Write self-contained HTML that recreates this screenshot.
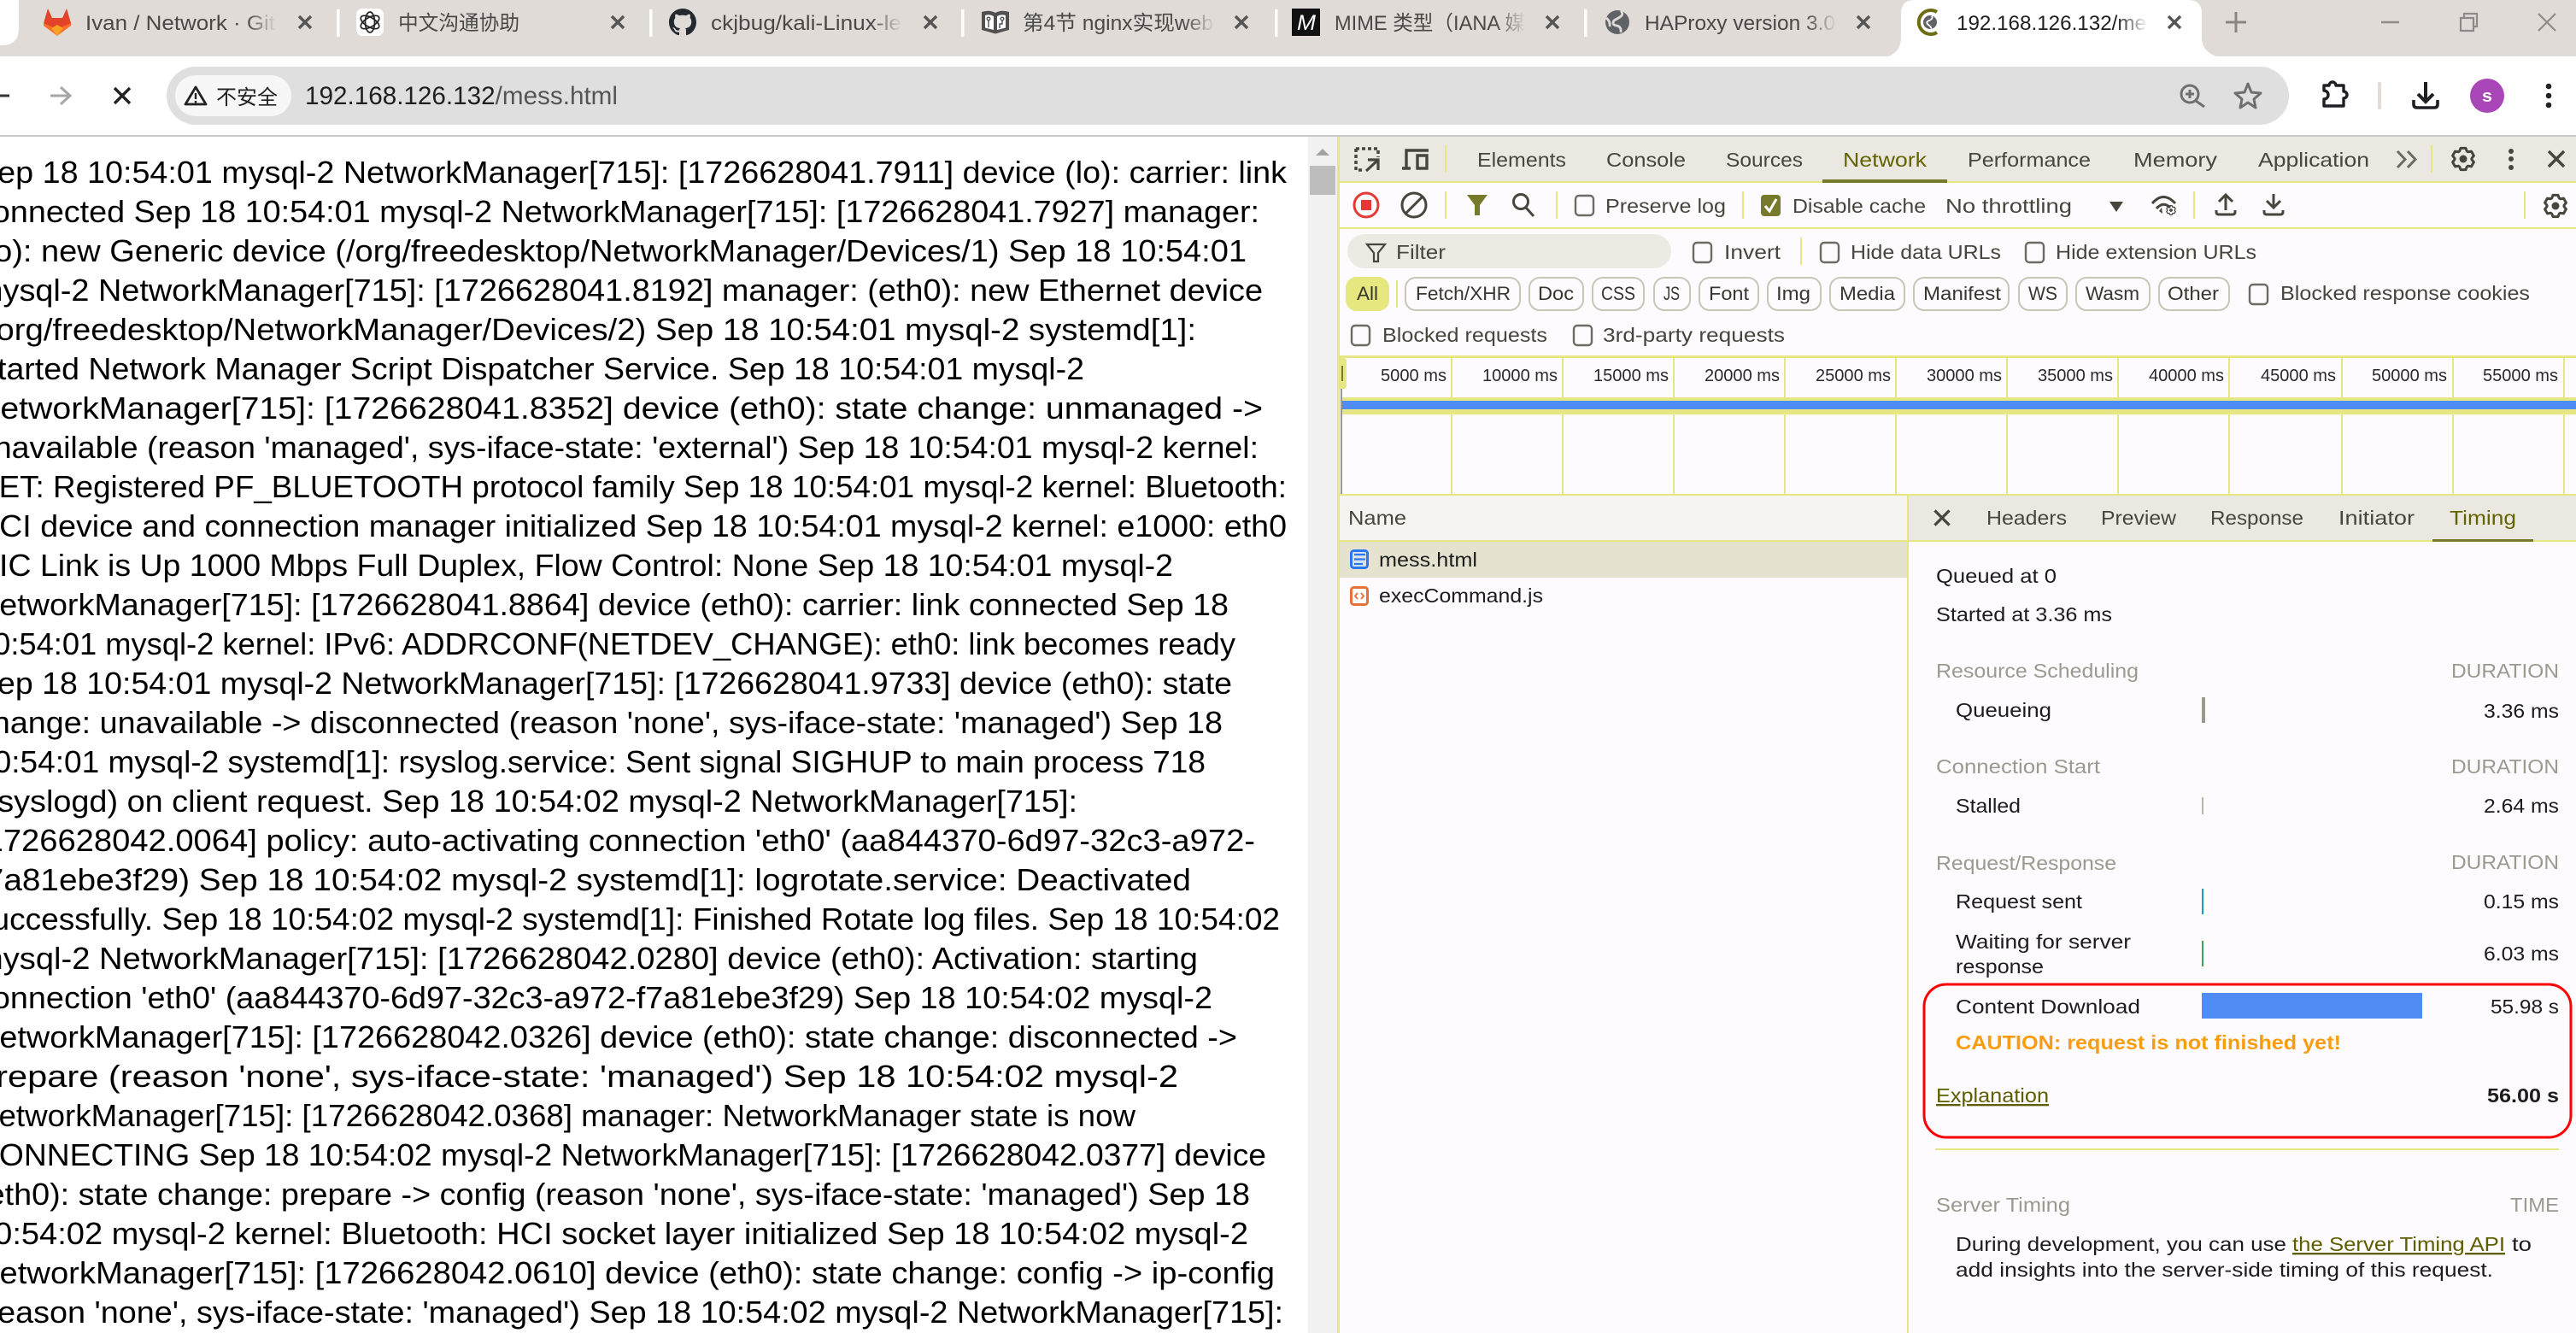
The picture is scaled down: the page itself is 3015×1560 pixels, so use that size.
<!DOCTYPE html>
<html lang="zh"><head><meta charset="utf-8"><title>192.168.126.132/mess.html</title>
<style>
html,body{margin:0;padding:0;width:3015px;height:1560px;overflow:hidden;background:#fff}
svg{display:block}
text{font-family:"Liberation Sans","Noto Sans CJK SC",sans-serif;font-size:23.5px;fill:#46463d;white-space:pre}
.b text{font-size:36px;fill:#000}
.t text{font-size:24px;fill:#4c4845}
.k text{fill:#1c1c1c}
.g text{fill:#9a9a8e}
.m text{font-size:20px;fill:#2a2a2a}
.c text{font-size:22.5px;fill:#37372f}
.i{fill:none;stroke:#46463d;stroke-width:3}
</style></head><body>
<svg width="3015" height="1560" viewBox="0 0 3015 1560" xmlns="http://www.w3.org/2000/svg">
<defs>
<linearGradient id="f"><stop offset="0" stop-color="#e1dbd8" stop-opacity="0"/><stop offset="1" stop-color="#e1dbd8"/></linearGradient>
<linearGradient id="fw"><stop offset="0" stop-color="#fff" stop-opacity="0"/><stop offset="1" stop-color="#fff"/></linearGradient>
<g id="gear"><polygon points="-4.38,-8.99 -2.92,-12.67 2.92,-12.67 4.38,-8.99 5.59,-8.29 9.51,-8.87 12.43,-3.8 9.98,-.7 9.98,.7 12.43,3.8 9.51,8.87 5.59,8.29 4.38,8.99 2.92,12.67 -2.92,12.67 -4.38,8.99 -5.59,8.29 -9.51,8.87 -12.43,3.8 -9.98,.7 -9.98,-.7 -12.43,-3.8 -9.51,-8.87 -5.59,-8.29" fill="none" stroke="#46463d" stroke-width="3" stroke-linejoin="round"/><circle r="4.5" fill="#46463d"/></g>
<path id="x" d="M-9-9L9 9M9-9L-9 9" fill="none" stroke="#46463d" stroke-width="3.4"/>
<path id="tx" d="M-7-7L7 7M7-7L-7 7" fill="none" stroke="#555" stroke-width="3.4"/>
</defs>

<!-- tab strip -->
<rect width="3015" height="66" fill="#e1dbd8"/>
<path d="M0 0H22V33Q22 53 2 53H0Z" fill="#fff"/>
<path d="M2210 66Q2225 60 2225 44V16Q2225 0 2241 0H2561Q2577 0 2577 16V44Q2577 60 2594 66Z" fill="#fff"/>
<g fill="#fff"><rect x="394" y="11" width="3.5" height="32"/><rect x="760" y="11" width="3.5" height="32"/><rect x="1125" y="11" width="3.5" height="32"/><rect x="1492" y="11" width="3.5" height="32"/><rect x="1854" y="11" width="3.5" height="32"/></g>

<!-- gitlab -->
<path d="M51 27L56 10 61 21H73L78 10 83 27 67 42Z" fill="#e24329"/>
<path d="M51 27L60 31 67 37 74 31 83 27 83 30 67 42 51 30Z" fill="#fc6d26"/>
<path d="M60 33L67 29 74 33 67 42Z" fill="#fca326"/>
<!-- openai -->
<rect x="417" y="10" width="32" height="32" rx="7" fill="#fff"/>
<g transform="translate(433 26)" fill="none" stroke="#222" stroke-width="1.7"><ellipse rx="5.5" ry="12"/><ellipse rx="5.5" ry="12" transform="rotate(60)"/><ellipse rx="5.5" ry="12" transform="rotate(120)"/></g>
<!-- github -->
<path transform="translate(783 10) scale(2)" fill="#24292f" d="M8 0C3.58 0 0 3.58 0 8c0 3.54 2.29 6.53 5.47 7.59.4.07.55-.17.55-.38 0-.19-.01-.82-.01-1.49-2.01.37-2.53-.49-2.69-.94-.09-.23-.48-.94-.82-1.13-.28-.15-.68-.52-.01-.53.63-.01 1.08.58 1.23.82.72 1.21 1.87.87 2.33.66.07-.52.28-.87.51-1.07-1.78-.2-3.64-.89-3.64-3.95 0-.87.31-1.59.82-2.15-.08-.2-.36-1.02.08-2.12 0 0 .67-.21 2.2.82.64-.18 1.32-.27 2-.27.68 0 1.36.09 2 .27 1.53-1.04 2.2-.82 2.2-.82.44 1.1.16 1.92.08 2.12.51.56.82 1.27.82 2.15 0 3.07-1.87 3.75-3.65 3.95.29.25.54.73.54 1.48 0 1.07-.01 1.93-.01 2.2 0 .21.15.46.55.38A8.013 8.013 0 0016 8c0-4.42-3.58-8-8-8z"/>
<!-- book -->
<path d="M1149 14Q1158 11 1165 15Q1172 11 1181 14V35L1165 39.5 1149 35Z" fill="#505050"/>
<path d="M1153 18Q1158 16 1163 19V35L1153 32.5ZM1167 19Q1172 16 1177 18V32.5L1167 35Z" fill="#fff"/>
<circle cx="1157" cy="22" r="1.8" fill="none" stroke="#505050" stroke-width="1.4"/>
<path d="M1157 24V32" stroke="#505050" stroke-width="1.4"/>
<circle cx="1173" cy="22" r="1.8" fill="none" stroke="#505050" stroke-width="1.4"/>
<path d="M1173 24V28H1170V33" stroke="#505050" stroke-width="1.4" fill="none"/>
<!-- mime -->
<rect x="1512" y="10" width="33" height="32" fill="#111"/>
<text x="1518" y="35" textLength="22" lengthAdjust="spacingAndGlyphs" style="font-size:25px;fill:#fff;font-style:italic">M</text>
<!-- globe -->
<circle cx="1893" cy="26" r="14" fill="#5f6368"/>
<path d="M1897 12.5Q1901 17 1896 20T1889 24Q1886 29 1892 30T1897 38M1880 21Q1885 25 1884 31" stroke="#e1dbd8" stroke-width="2.8" fill="none"/>
<!-- active favicon -->
<path d="M2267 14A14 14 0 1 0 2267 38" stroke="#6d6c12" stroke-width="4" fill="none"/>
<circle cx="2259" cy="26" r="8" fill="#5f6368"/>
<path d="M2261 18.5Q2263 22 2258 24T2257 29 2260 33.5" stroke="#fff" stroke-width="1.8" fill="none"/>

<g class="t">
<text x="100" y="35" textLength="222" lengthAdjust="spacingAndGlyphs">Ivan / Network · Git</text>
<text x="466" y="35" textLength="142" lengthAdjust="spacingAndGlyphs">中文沟通协助</text>
<text x="832" y="35" textLength="223" lengthAdjust="spacingAndGlyphs">ckjbug/kali-Linux-le</text>
<text x="1197" y="35" textLength="223" lengthAdjust="spacingAndGlyphs">第4节 nginx实现web</text>
<text x="1562" y="35" textLength="223" lengthAdjust="spacingAndGlyphs">MIME 类型（IANA 媒</text>
<text x="1925" y="35" textLength="223" lengthAdjust="spacingAndGlyphs">HAProxy version 3.0</text>
<text x="2290" y="35" textLength="222" lengthAdjust="spacingAndGlyphs" style="fill:#1f1f1f">192.168.126.132/me</text>
</g>
<rect x="288" y="8" width="36" height="40" fill="url(#f)"/><rect x="1020" y="8" width="36" height="40" fill="url(#f)"/><rect x="1386" y="8" width="36" height="40" fill="url(#f)"/><rect x="1750" y="8" width="36" height="40" fill="url(#f)"/><rect x="2114" y="8" width="36" height="40" fill="url(#f)"/><rect x="2478" y="8" width="36" height="40" fill="url(#fw)"/>
<use href="#tx" transform="translate(357 26)"/><use href="#tx" transform="translate(723 26)"/><use href="#tx" transform="translate(1089 26)"/><use href="#tx" transform="translate(1453 26)"/><use href="#tx" transform="translate(1817 26)"/><use href="#tx" transform="translate(2181 26)"/><use href="#tx" transform="translate(2545 26)"/>
<path d="M2617 14V38M2605 26H2629" stroke="#8a8583" stroke-width="3"/>
<path d="M2787 26H2808" stroke="#8f8a88" stroke-width="2.5"/>
<path d="M2880 21H2895V36H2880ZM2884 21V16H2899V31H2895" fill="none" stroke="#8f8a88" stroke-width="2.2"/>
<path d="M2971 16L2991 36M2991 16L2971 36" stroke="#8f8a88" stroke-width="2.2"/>

<!-- toolbar -->
<rect y="66" width="3015" height="92" fill="#fff"/>
<rect y="158" width="3015" height="2" fill="#c8c8c8"/>
<path d="M-6 112H11" stroke="#333" stroke-width="3"/>
<path d="M59 112H81M71 102L82 112 71 122" fill="none" stroke="#a6a6a6" stroke-width="3"/>
<path d="M134 103L152 121M152 103L134 121" stroke="#222" stroke-width="3.4"/>
<rect x="195" y="78" width="2484" height="68" rx="34" fill="#dfdfdf"/>
<rect x="205" y="88" width="136" height="48" rx="24" fill="#f7f7f7"/>
<path d="M229 102L241 122H217Z" fill="none" stroke="#222" stroke-width="2.8" stroke-linejoin="round"/>
<path d="M229 109V116M229 118V120.5" stroke="#222" stroke-width="2.4"/>
<text x="253" y="122" textLength="72" lengthAdjust="spacingAndGlyphs" style="font-size:24px;fill:#222">不安全</text>
<text x="357" y="122" textLength="366" lengthAdjust="spacingAndGlyphs" style="font-size:30px;fill:#1f1f1f">192.168.126.132<tspan style="fill:#555">/mess.html</tspan></text>
<g fill="none" stroke="#6f6f6f" stroke-width="3">
<circle cx="2563" cy="110" r="10"/><path d="M2570 118L2580 125M2563 105V115M2558 110H2568"/>
<path d="M2631 98L2635 108 2646 109 2638 116 2640 126 2631 120 2622 126 2624 116 2616 109 2627 108Z" stroke-linejoin="round"/>
</g>
<path d="M2720 100H2726A4 4 0 0 1 2734 100H2743V107A4 4 0 0 1 2743 115V124H2720V116A5 5 0 0 0 2720 106Z" fill="none" stroke="#1f1f24" stroke-width="3.4" stroke-linejoin="round"/>
<rect x="2783" y="96" width="4" height="32" rx="2" fill="#e1dbd8"/>
<path d="M2839 96V118M2830 110L2839 119 2848 110" fill="none" stroke="#1f1f24" stroke-width="4"/>
<path d="M2825 117V122Q2825 126 2829 126H2849Q2853 126 2853 122V117" fill="none" stroke="#1f1f24" stroke-width="3.6"/>
<circle cx="2911" cy="112" r="20" fill="#a946b8"/>
<text x="2905" y="119" textLength="12" lengthAdjust="spacingAndGlyphs" style="font-size:20px;font-weight:bold;fill:#fff">s</text>
<g fill="#222"><circle cx="2983" cy="101" r="3.3"/><circle cx="2983" cy="112" r="3.3"/><circle cx="2983" cy="123" r="3.3"/></g>

<!-- page body -->
<g class="b">
<text x="-28" y="214" textLength="1534" lengthAdjust="spacingAndGlyphs">Sep 18 10:54:01 mysql-2 NetworkManager[715]: [1726628041.7911] device (lo): carrier: link</text>
<text x="-28" y="260" textLength="1502" lengthAdjust="spacingAndGlyphs">connected Sep 18 10:54:01 mysql-2 NetworkManager[715]: [1726628041.7927] manager:</text>
<text x="-28" y="306" textLength="1487" lengthAdjust="spacingAndGlyphs">(lo): new Generic device (/org/freedesktop/NetworkManager/Devices/1) Sep 18 10:54:01</text>
<text x="-28" y="352" textLength="1506" lengthAdjust="spacingAndGlyphs">mysql-2 NetworkManager[715]: [1726628041.8192] manager: (eth0): new Ethernet device</text>
<text x="-28" y="398" textLength="1428" lengthAdjust="spacingAndGlyphs">(/org/freedesktop/NetworkManager/Devices/2) Sep 18 10:54:01 mysql-2 systemd[1]:</text>
<text x="-28" y="444" textLength="1297" lengthAdjust="spacingAndGlyphs">Started Network Manager Script Dispatcher Service. Sep 18 10:54:01 mysql-2</text>
<text x="-28" y="490" textLength="1506" lengthAdjust="spacingAndGlyphs">NetworkManager[715]: [1726628041.8352] device (eth0): state change: unmanaged -&gt;</text>
<text x="-28" y="536" textLength="1501" lengthAdjust="spacingAndGlyphs">unavailable (reason 'managed', sys-iface-state: 'external') Sep 18 10:54:01 mysql-2 kernel:</text>
<text x="-28" y="582" textLength="1534" lengthAdjust="spacingAndGlyphs">NET: Registered PF_BLUETOOTH protocol family Sep 18 10:54:01 mysql-2 kernel: Bluetooth:</text>
<text x="-28" y="628" textLength="1534" lengthAdjust="spacingAndGlyphs">HCI device and connection manager initialized Sep 18 10:54:01 mysql-2 kernel: e1000: eth0</text>
<text x="-28" y="674" textLength="1401" lengthAdjust="spacingAndGlyphs">NIC Link is Up 1000 Mbps Full Duplex, Flow Control: None Sep 18 10:54:01 mysql-2</text>
<text x="-28" y="720" textLength="1466" lengthAdjust="spacingAndGlyphs">NetworkManager[715]: [1726628041.8864] device (eth0): carrier: link connected Sep 18</text>
<text x="-28" y="766" textLength="1474" lengthAdjust="spacingAndGlyphs">10:54:01 mysql-2 kernel: IPv6: ADDRCONF(NETDEV_CHANGE): eth0: link becomes ready</text>
<text x="-28" y="812" textLength="1470" lengthAdjust="spacingAndGlyphs">Sep 18 10:54:01 mysql-2 NetworkManager[715]: [1726628041.9733] device (eth0): state</text>
<text x="-28" y="858" textLength="1459" lengthAdjust="spacingAndGlyphs">change: unavailable -&gt; disconnected (reason 'none', sys-iface-state: 'managed') Sep 18</text>
<text x="-28" y="904" textLength="1439" lengthAdjust="spacingAndGlyphs">10:54:01 mysql-2 systemd[1]: rsyslog.service: Sent signal SIGHUP to main process 718</text>
<text x="-28" y="950" textLength="1289" lengthAdjust="spacingAndGlyphs">(rsyslogd) on client request. Sep 18 10:54:02 mysql-2 NetworkManager[715]:</text>
<text x="-28" y="996" textLength="1497" lengthAdjust="spacingAndGlyphs">[1726628042.0064] policy: auto-activating connection 'eth0' (aa844370-6d97-32c3-a972-</text>
<text x="-28" y="1042" textLength="1422" lengthAdjust="spacingAndGlyphs">f7a81ebe3f29) Sep 18 10:54:02 mysql-2 systemd[1]: logrotate.service: Deactivated</text>
<text x="-28" y="1088" textLength="1526" lengthAdjust="spacingAndGlyphs">successfully. Sep 18 10:54:02 mysql-2 systemd[1]: Finished Rotate log files. Sep 18 10:54:02</text>
<text x="-28" y="1134" textLength="1430" lengthAdjust="spacingAndGlyphs">mysql-2 NetworkManager[715]: [1726628042.0280] device (eth0): Activation: starting</text>
<text x="-28" y="1180" textLength="1447" lengthAdjust="spacingAndGlyphs">connection 'eth0' (aa844370-6d97-32c3-a972-f7a81ebe3f29) Sep 18 10:54:02 mysql-2</text>
<text x="-28" y="1226" textLength="1476" lengthAdjust="spacingAndGlyphs">NetworkManager[715]: [1726628042.0326] device (eth0): state change: disconnected -&gt;</text>
<text x="-28" y="1272" textLength="1407" lengthAdjust="spacingAndGlyphs">prepare (reason 'none', sys-iface-state: 'managed') Sep 18 10:54:02 mysql-2</text>
<text x="-28" y="1318" textLength="1357" lengthAdjust="spacingAndGlyphs">NetworkManager[715]: [1726628042.0368] manager: NetworkManager state is now</text>
<text x="-28" y="1364" textLength="1510" lengthAdjust="spacingAndGlyphs">CONNECTING Sep 18 10:54:02 mysql-2 NetworkManager[715]: [1726628042.0377] device</text>
<text x="-28" y="1410" textLength="1491" lengthAdjust="spacingAndGlyphs">(eth0): state change: prepare -&gt; config (reason 'none', sys-iface-state: 'managed') Sep 18</text>
<text x="-28" y="1456" textLength="1489" lengthAdjust="spacingAndGlyphs">10:54:02 mysql-2 kernel: Bluetooth: HCI socket layer initialized Sep 18 10:54:02 mysql-2</text>
<text x="-28" y="1502" textLength="1520" lengthAdjust="spacingAndGlyphs">NetworkManager[715]: [1726628042.0610] device (eth0): state change: config -&gt; ip-config</text>
<text x="-28" y="1548" textLength="1530" lengthAdjust="spacingAndGlyphs">(reason 'none', sys-iface-state: 'managed') Sep 18 10:54:02 mysql-2 NetworkManager[715]:</text>
</g>

<!-- scrollbar -->
<rect x="1531" y="160" width="34" height="1400" fill="#f1f1f1"/>
<path d="M1540 182L1548 174 1556 182Z" fill="#a3a3a3"/>
<rect x="1533" y="194" width="30" height="34" fill="#bdbdbd"/>

<!-- devtools backgrounds -->
<rect x="1565" y="160" width="1450" height="1400" fill="#fdfbfe"/>
<rect x="1565" y="160" width="3" height="1400" fill="#e6e683"/>
<rect x="1568" y="160" width="1447" height="52" fill="#ebe8e1"/>
<rect x="1568" y="212" width="1447" height="2" fill="#e6e683"/>
<rect x="1568" y="266" width="1447" height="2" fill="#e6e683"/>
<rect x="1568" y="416" width="1447" height="3" fill="#e6e683"/>
<rect x="2133" y="210" width="146" height="4" fill="#777a2a"/>
<g fill="#e6e683"><rect x="1691" y="170" width="2" height="32"/><rect x="2845" y="170" width="2" height="32"/><rect x="1691" y="224" width="2" height="32"/><rect x="1821" y="224" width="2" height="32"/><rect x="2039" y="224" width="2" height="32"/><rect x="2567" y="224" width="2" height="32"/><rect x="2954" y="224" width="2" height="32"/><rect x="2107" y="278" width="2" height="32"/><rect x="1634" y="328" width="2" height="32"/></g>

<!-- devtools row 1 -->
<path d="M1587 174H1613V184M1587 174V199H1597" fill="none" stroke="#46463d" stroke-width="3.5" stroke-dasharray="4 3"/>
<path d="M1601 187H1613V199M1612 188L1599 200" fill="none" stroke="#46463d" stroke-width="3.2"/>
<path d="M1641 197H1651M1646 197V176H1672M1659 182H1670V197H1659Z" fill="none" stroke="#46463d" stroke-width="3.4"/>
<g>
<text x="1729" y="195" textLength="104" lengthAdjust="spacingAndGlyphs">Elements</text>
<text x="1880" y="195" textLength="93" lengthAdjust="spacingAndGlyphs">Console</text>
<text x="2020" y="195" textLength="90" lengthAdjust="spacingAndGlyphs">Sources</text>
<text x="2157" y="195" textLength="98" lengthAdjust="spacingAndGlyphs" style="fill:#636300">Network</text>
<text x="2303" y="195" textLength="144" lengthAdjust="spacingAndGlyphs">Performance</text>
<text x="2497" y="195" textLength="98" lengthAdjust="spacingAndGlyphs">Memory</text>
<text x="2643" y="195" textLength="130" lengthAdjust="spacingAndGlyphs">Application</text>
</g>
<path d="M2806 177L2815 186.500 2806 196M2818 177L2827 186.500 2818 196" fill="none" stroke="#6b6b60" stroke-width="3"/>
<use href="#gear" transform="translate(2883 186)"/>
<g fill="#46463d"><circle cx="2939" cy="177" r="3"/><circle cx="2939" cy="186" r="3"/><circle cx="2939" cy="196" r="3"/></g>
<use href="#x" transform="translate(2992 186)"/>

<!-- devtools row 2 -->
<circle cx="1599" cy="240" r="14" fill="none" stroke="#e53935" stroke-width="3"/>
<rect x="1593" y="234" width="12" height="12" fill="#e53935"/>
<circle cx="1655" cy="240" r="14" fill="none" stroke="#46463d" stroke-width="3"/>
<path d="M1645 250L1665 230" stroke="#46463d" stroke-width="3"/>
<path d="M1717 228H1741L1732 240V252H1726V240Z" fill="#777a2a"/>
<circle cx="1780" cy="236" r="8.500" class="i"/><path d="M1786 243L1795 253" class="i" />
<rect x="1844" y="229" width="21" height="23" rx="4" fill="none" stroke="#6c6c64" stroke-width="2.400"/>
<text x="1879" y="249" textLength="141" lengthAdjust="spacingAndGlyphs">Preserve log</text>
<rect x="2061" y="228" width="23" height="25" rx="4" fill="#777a2a"/>
<path d="M2066 241L2071 247 2079 233" fill="none" stroke="#fff" stroke-width="3"/>
<text x="2098" y="249" textLength="156" lengthAdjust="spacingAndGlyphs">Disable cache</text>
<text x="2277" y="249" textLength="148" lengthAdjust="spacingAndGlyphs">No throttling</text>
<path d="M2469 236H2485L2477 248Z" fill="#46463d"/>
<path d="M2519 238Q2532 223 2546 238M2524 244Q2532 235 2540 243" class="i"/>
<path d="M2530 243L2527 247 2531 250Z" fill="#46463d"/>
<use href="#gear" transform="translate(2541 246) scale(.42)"/>
<path d="M2605 246V228M2597 236L2605 228 2613 236" class="i"/>
<path d="M2594 246V248Q2594 251 2597 251H2613Q2616 251 2616 248V246" class="i"/>
<path d="M2661 227V242M2653 235L2661 243 2669 235" class="i"/>
<path d="M2650 246V248Q2650 251 2653 251H2669Q2672 251 2672 248V246" class="i"/>
<use href="#gear" transform="translate(2991 241)"/>

<!-- filter row -->
<rect x="1577" y="274" width="379" height="40" rx="20" fill="#ecebe3"/>
<path d="M1600 286H1621L1613 296V306H1608V296Z" fill="none" stroke="#46463d" stroke-width="2.200"/>
<text x="1634" y="303" textLength="58" lengthAdjust="spacingAndGlyphs">Filter</text>
<g fill="none" stroke="#6c6c64" stroke-width="2.400"><rect x="1982" y="284" width="21" height="23" rx="4"/><rect x="2131" y="284" width="21" height="23" rx="4"/><rect x="2371" y="284" width="21" height="23" rx="4"/><rect x="2633" y="333" width="21" height="23" rx="4"/><rect x="1582" y="381" width="21" height="23" rx="4"/><rect x="1842" y="381" width="21" height="23" rx="4"/></g>
<text x="2018" y="303" textLength="66" lengthAdjust="spacingAndGlyphs">Invert</text>
<text x="2166" y="303" textLength="176" lengthAdjust="spacingAndGlyphs">Hide data URLs</text>
<text x="2406" y="303" textLength="235" lengthAdjust="spacingAndGlyphs">Hide extension URLs</text>

<!-- chips -->
<rect x="1575" y="324" width="51" height="40" rx="13" fill="#e6e77f"/>
<g fill="none" stroke="#c9c6b7" stroke-width="2"><rect x="1645" y="325" width="134" height="38" rx="12"/><rect x="1790" y="325" width="63" height="38" rx="12"/><rect x="1864" y="325" width="60" height="38" rx="12"/><rect x="1936" y="325" width="42" height="38" rx="12"/><rect x="1989" y="325" width="69" height="38" rx="12"/><rect x="2069" y="325" width="62" height="38" rx="12"/><rect x="2142" y="325" width="87" height="38" rx="12"/><rect x="2240" y="325" width="111" height="38" rx="12"/><rect x="2363" y="325" width="56" height="38" rx="12"/><rect x="2430" y="325" width="86" height="38" rx="12"/><rect x="2527" y="325" width="82" height="38" rx="12"/></g>
<g class="c">
<text x="1588" y="351" textLength="25" lengthAdjust="spacingAndGlyphs">All</text>
<text x="1657" y="351" textLength="111" lengthAdjust="spacingAndGlyphs">Fetch/XHR</text>
<text x="1800" y="351" textLength="42" lengthAdjust="spacingAndGlyphs">Doc</text>
<text x="1874" y="351" textLength="40" lengthAdjust="spacingAndGlyphs">CSS</text>
<text x="1947" y="351" textLength="19" lengthAdjust="spacingAndGlyphs">JS</text>
<text x="2000" y="351" textLength="47" lengthAdjust="spacingAndGlyphs">Font</text>
<text x="2079" y="351" textLength="40" lengthAdjust="spacingAndGlyphs">Img</text>
<text x="2153" y="351" textLength="65" lengthAdjust="spacingAndGlyphs">Media</text>
<text x="2251" y="351" textLength="91" lengthAdjust="spacingAndGlyphs">Manifest</text>
<text x="2374" y="351" textLength="34" lengthAdjust="spacingAndGlyphs">WS</text>
<text x="2441" y="351" textLength="63" lengthAdjust="spacingAndGlyphs">Wasm</text>
<text x="2537" y="351" textLength="60" lengthAdjust="spacingAndGlyphs">Other</text>
</g>
<text x="2669" y="351" textLength="292" lengthAdjust="spacingAndGlyphs">Blocked response cookies</text>
<text x="1618" y="400" textLength="193" lengthAdjust="spacingAndGlyphs">Blocked requests</text>
<text x="1876" y="400" textLength="213" lengthAdjust="spacingAndGlyphs">3rd-party requests</text>

<!-- timeline -->
<g fill="#e6e683"><rect x="1698" y="419" width="2" height="160"/><rect x="1828" y="419" width="2" height="160"/><rect x="1958" y="419" width="2" height="160"/><rect x="2088" y="419" width="2" height="160"/><rect x="2218" y="419" width="2" height="160"/><rect x="2348" y="419" width="2" height="160"/><rect x="2478" y="419" width="2" height="160"/><rect x="2608" y="419" width="2" height="160"/><rect x="2740" y="419" width="2" height="160"/><rect x="2870" y="419" width="2" height="160"/><rect x="3000" y="419" width="2" height="160"/></g>
<rect x="1566" y="419" width="10" height="36" rx="3" fill="#e6e683"/>
<rect x="1570" y="428" width="2" height="18" fill="#777a2a"/>
<rect x="1569" y="455" width="2" height="124" fill="#9a9a8e"/>
<rect x="1571" y="465" width="1444" height="20" fill="#e6e683"/>
<rect x="1571" y="469" width="1444" height="10" fill="#4f8df5"/>
<g class="m">
<text x="1616" y="446" textLength="77" lengthAdjust="spacingAndGlyphs">5000 ms</text>
<text x="1735" y="446" textLength="88" lengthAdjust="spacingAndGlyphs">10000 ms</text>
<text x="1865" y="446" textLength="88" lengthAdjust="spacingAndGlyphs">15000 ms</text>
<text x="1995" y="446" textLength="88" lengthAdjust="spacingAndGlyphs">20000 ms</text>
<text x="2125" y="446" textLength="88" lengthAdjust="spacingAndGlyphs">25000 ms</text>
<text x="2255" y="446" textLength="88" lengthAdjust="spacingAndGlyphs">30000 ms</text>
<text x="2385" y="446" textLength="88" lengthAdjust="spacingAndGlyphs">35000 ms</text>
<text x="2515" y="446" textLength="88" lengthAdjust="spacingAndGlyphs">40000 ms</text>
<text x="2646" y="446" textLength="88" lengthAdjust="spacingAndGlyphs">45000 ms</text>
<text x="2776" y="446" textLength="88" lengthAdjust="spacingAndGlyphs">50000 ms</text>
<text x="2906" y="446" textLength="88" lengthAdjust="spacingAndGlyphs">55000 ms</text>
</g>
<rect x="1568" y="578" width="1447" height="2" fill="#e6e683"/>

<!-- lower panes -->
<rect x="1568" y="580" width="664" height="52" fill="#f5f4f0"/>
<rect x="2234" y="580" width="781" height="52" fill="#ebe8e1"/>
<rect x="1568" y="632" width="1447" height="2" fill="#e6e683"/>
<rect x="2232" y="580" width="2" height="980" fill="#e6e683"/>
<rect x="2847" y="631" width="118" height="3" fill="#777a2a"/>
<rect x="1568" y="634" width="664" height="42" fill="#e5e3d0"/>
<text x="1578" y="614" textLength="68" lengthAdjust="spacingAndGlyphs">Name</text>
<use href="#x" transform="translate(2273 606) scale(.95)"/>
<text x="2325" y="614" textLength="94" lengthAdjust="spacingAndGlyphs">Headers</text>
<text x="2459" y="614" textLength="88" lengthAdjust="spacingAndGlyphs">Preview</text>
<text x="2587" y="614" textLength="109" lengthAdjust="spacingAndGlyphs">Response</text>
<text x="2737" y="614" textLength="89" lengthAdjust="spacingAndGlyphs">Initiator</text>
<text x="2867" y="614" textLength="78" lengthAdjust="spacingAndGlyphs" style="fill:#636300">Timing</text>

<rect x="1581.500" y="644.500" width="19" height="20" rx="3" fill="#dbe3ea" stroke="#2a78f0" stroke-width="3"/>
<path d="M1585 649H1598M1585 654.500H1598M1585 660H1595" stroke="#2a78f0" stroke-width="2.200"/>
<rect x="1581.500" y="687.500" width="19" height="20" rx="3" fill="#fff" stroke="#e8703a" stroke-width="3"/>
<path d="M1589 694L1586 697.500 1589 701M1593 694L1596 697.500 1593 701" fill="none" stroke="#e8703a" stroke-width="1.900"/>
<g class="k">
<text x="1614" y="663" textLength="115" lengthAdjust="spacingAndGlyphs">mess.html</text>
<text x="1614" y="705" textLength="192" lengthAdjust="spacingAndGlyphs">execCommand.js</text>
<text x="2266" y="682" textLength="141" lengthAdjust="spacingAndGlyphs">Queued at 0</text>
<text x="2266" y="727" textLength="206" lengthAdjust="spacingAndGlyphs">Started at 3.36 ms</text>
<text x="2289" y="839" textLength="112" lengthAdjust="spacingAndGlyphs">Queueing</text>
<text x="2907" y="840" textLength="88" lengthAdjust="spacingAndGlyphs">3.36 ms</text>
<text x="2289" y="951" textLength="76" lengthAdjust="spacingAndGlyphs">Stalled</text>
<text x="2907" y="951" textLength="88" lengthAdjust="spacingAndGlyphs">2.64 ms</text>
<text x="2289" y="1063" textLength="148" lengthAdjust="spacingAndGlyphs">Request sent</text>
<text x="2907" y="1063" textLength="88" lengthAdjust="spacingAndGlyphs">0.15 ms</text>
<text x="2289" y="1110" textLength="205" lengthAdjust="spacingAndGlyphs">Waiting for server</text>
<text x="2289" y="1139" textLength="103" lengthAdjust="spacingAndGlyphs">response</text>
<text x="2907" y="1124" textLength="88" lengthAdjust="spacingAndGlyphs">6.03 ms</text>
<text x="2289" y="1186" textLength="216" lengthAdjust="spacingAndGlyphs">Content Download</text>
<text x="2915" y="1186" textLength="80" lengthAdjust="spacingAndGlyphs">55.98 s</text>
<text x="2911" y="1290" textLength="84" lengthAdjust="spacingAndGlyphs" style="font-weight:bold">56.00 s</text>
<text x="2289" y="1464" textLength="387" lengthAdjust="spacingAndGlyphs">During development, you can use</text>
<text x="2940" y="1464" textLength="23" lengthAdjust="spacingAndGlyphs">to</text>
<text x="2289" y="1494" textLength="629" lengthAdjust="spacingAndGlyphs">add insights into the server-side timing of this request.</text>
</g>
<g class="g">
<text x="2266" y="793" textLength="237" lengthAdjust="spacingAndGlyphs">Resource Scheduling</text>
<text x="2869" y="793" textLength="126" lengthAdjust="spacingAndGlyphs">DURATION</text>
<text x="2266" y="905" textLength="192" lengthAdjust="spacingAndGlyphs">Connection Start</text>
<text x="2869" y="905" textLength="126" lengthAdjust="spacingAndGlyphs">DURATION</text>
<text x="2266" y="1018" textLength="211" lengthAdjust="spacingAndGlyphs">Request/Response</text>
<text x="2869" y="1017" textLength="126" lengthAdjust="spacingAndGlyphs">DURATION</text>
<text x="2266" y="1418" textLength="157" lengthAdjust="spacingAndGlyphs">Server Timing</text>
<text x="2938" y="1418" textLength="57" lengthAdjust="spacingAndGlyphs">TIME</text>
</g>
<rect x="2577" y="816" width="4" height="30" fill="#99998c"/>
<rect x="2577" y="933" width="2" height="20" fill="#b5b5aa"/>
<rect x="2577" y="1040" width="2" height="30" fill="#1a9bc0"/>
<rect x="2577" y="1101" width="2" height="30" fill="#34a853"/>
<rect x="2577" y="1162" width="258" height="30" fill="#4f8df5"/>
<text x="2289" y="1228" textLength="451" lengthAdjust="spacingAndGlyphs" style="font-weight:bold;fill:#f79d0f">CAUTION: request is not finished yet!</text>
<text x="2266" y="1290" textLength="132" lengthAdjust="spacingAndGlyphs" style="fill:#5e5e00;text-decoration:underline">Explanation</text>
<text x="2683" y="1464" textLength="249" lengthAdjust="spacingAndGlyphs" style="fill:#5e5e00;text-decoration:underline">the Server Timing API</text>
<rect x="2265" y="1344" width="730" height="2" fill="#e6e683"/>
<rect x="2252" y="1152" width="757" height="179" rx="26" fill="none" stroke="#f00" stroke-width="3"/>
</svg>
</body></html>
